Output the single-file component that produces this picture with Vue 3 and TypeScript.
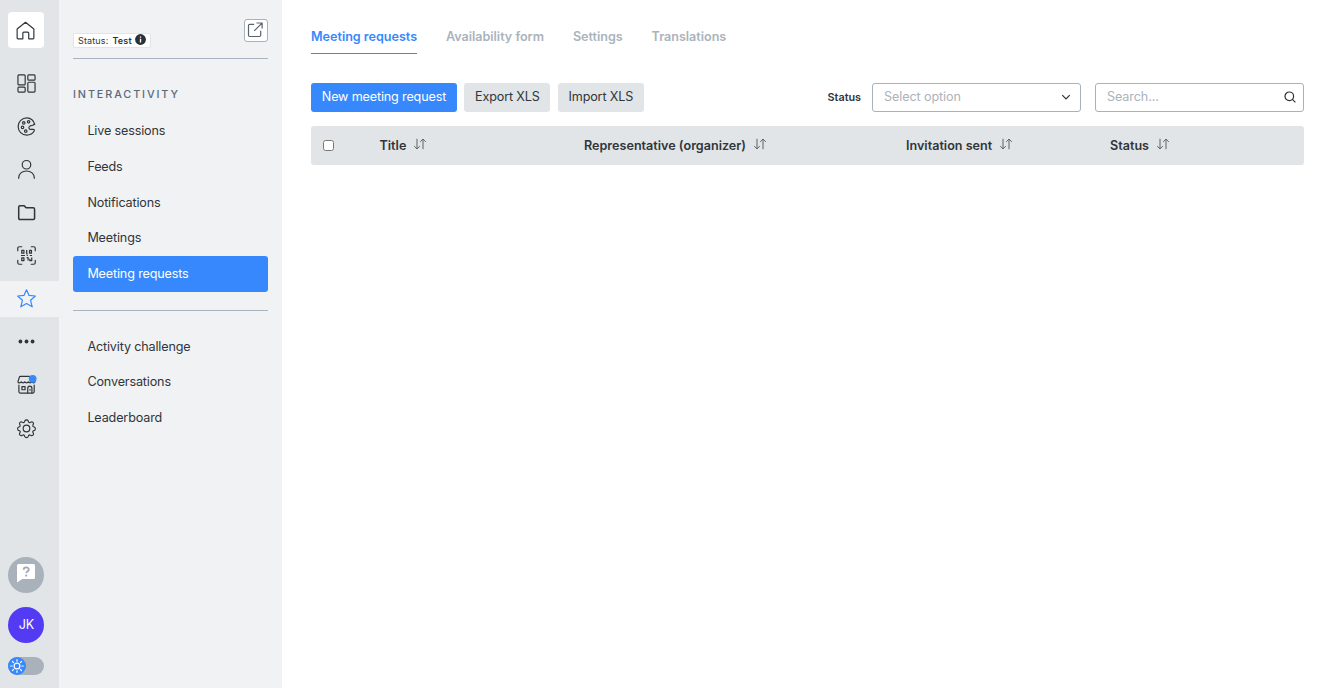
<script setup lang="ts">
import { ref } from 'vue'

const railItems = ['dashboard', 'palette', 'user', 'folder', 'scan', 'star', 'more', 'store', 'gear']
const activeRail = ref('star')

const menuMain = ['Live sessions', 'Feeds', 'Notifications', 'Meetings', 'Meeting requests']
const menuExtra = ['Activity challenge', 'Conversations', 'Leaderboard']
const activeMenu = ref('Meeting requests')

const tabs = ['Meeting requests', 'Availability form', 'Settings', 'Translations']
const activeTab = ref('Meeting requests')

const columns = ['Title', 'Representative (organizer)', 'Invitation sent', 'Status']
const search = ref('')
</script>

<template>
  <div class="layout">
    <nav class="rail">
      <button class="home" aria-label="Home">
        <svg class="icon" viewBox="0 0 20 20"><path d="M1.200 8.500 10 1.400l8.800 7.100V18a.8.8 0 0 1-.8.8h-4.600v-6a1 1 0 0 0-1-1H8.200a1 1 0 0 0-1 1v6H2a.8.8 0 0 1-.8-.8z" /></svg>
      </button>
      <div class="rail-list">
        <button v-for="item in railItems" :key="item" class="rail-item" :class="{ active: item === activeRail }" :aria-label="item" @click="activeRail = item">
          <svg v-if="item === 'dashboard'" class="icon" viewBox="0 0 20 20">
            <rect x="1" y="1" width="7.600" height="10.500" rx="1" /><rect x="11.400" y="1" width="7.600" height="5.500" rx="1" />
            <rect x="1" y="13.900" width="7.600" height="5.100" rx="1" /><rect x="11.400" y="8.700" width="7.600" height="10.300" rx="1" />
          </svg>
          <svg v-else-if="item === 'palette'" class="icon" viewBox="0 0 20 20">
            <path d="M18.600 7.800C17.900 3.900 14.500 1 10.400 1 5.400 1 1.200 5 1.200 10s4 9 9 9c3.500 0 6.600-1.700 8-4.500.3-.8-.2-1.400-1-1.400h-2.400c-2.500 0-3.200-2.700-1-3.700l2.900-.7c1-.1 1-.4.900-.9z" />
            <circle cx="12.200" cy="5.100" r="1.300" /><circle cx="7.100" cy="6.200" r="1.300" /><circle cx="5.800" cy="11" r="1.300" /><circle cx="9.200" cy="14.900" r="1.300" />
          </svg>
          <svg v-else-if="item === 'user'" class="icon" viewBox="0 0 20 20">
            <circle cx="10" cy="5" r="4.500" /><path d="M1.800 19.300v-.6c0-4.200 3.500-7.100 8.200-7.100s8.200 2.900 8.200 7.100v.6" />
          </svg>
          <svg v-else-if="item === 'folder'" class="icon folder" viewBox="0 0 20 20">
            <path d="M1.800 4.200c0-.9.500-1.400 1.400-1.400h4c1.300 0 1.500 2.200 2.700 2.200H17c1 0 1.500.5 1.500 1.500V16c0 .8-.5 1.300-1.300 1.300H3.200c-.9 0-1.400-.5-1.400-1.300z" />
          </svg>
          <svg v-else-if="item === 'scan'" class="icon" viewBox="0 0 20 20">
            <path d="M.8 5V2.400Q.8.800 2.400.8H5M15 .8h2.600q1.600 0 1.600 1.600V5M19.200 15v2.600q0 1.600-1.600 1.600H15M5 19.200H2.400q-1.600 0-1.600-1.600V15" />
            <path class="code" d="M5 4.700h2.300v2.800H5zM13.200 4.700h2v2.800h-2zM5 12.500h2.300v2.800H5zM10.200 4.200v4h1M4.200 10h4.200M10.200 10h1.300M13.500 10h2.300M10.200 12.300h1.500v3M15.500 12v3.500h-2v-2" />
          </svg>
          <svg v-else-if="item === 'star'" class="icon" viewBox="0 0 20 20">
            <path d="m10 .8 2.700 6 6.600.6-5 4.500 1.700 6.900-6-3.500-6 3.500 1.700-6.900-5-4.500 6.600-.6z" />
          </svg>
          <svg v-else-if="item === 'more'" class="icon solid" viewBox="0 0 20 20">
            <circle cx="3.600" cy="10" r="2" /><circle cx="10" cy="10" r="2" /><circle cx="16.400" cy="10" r="2" />
          </svg>
          <svg v-else-if="item === 'store'" class="icon" viewBox="0 0 20 20">
            <path d="M13 1.500H3.700q-1 0-1.300 1L1 7.200c.2 1.500 2.700 1.600 3.500 0 .8 1.500 3 1.500 3.700 0 .8 1.500 3 1.500 3.700 0 .8 1.500 3 1.500 3.700 0 .8 1.500 3 1.400 3.300 0M2 10.700v7q0 1.300 1.300 1.300h13.500q1.300 0 1.300-1.300v-7" />
            <path d="M5.200 12.200h3.300v3.300H5.200zM11.300 18.800v-4.700q0-2.400 2.200-2.400t2.200 2.400v4.700M13.700 15.200v.8" />
            <circle class="dot" cx="16.500" cy="4" r="4.100" />
          </svg>
          <svg v-else class="icon" viewBox="0 0 20 20">
            <circle cx="10" cy="10" r="3.500" />
            <path d="M8.300 1.800c.5-1.100 2.900-1.100 3.400 0l.5 1.300c.3.600 1 .9 1.600.6l1.300-.6c1.100-.5 2.700 1.100 2.200 2.200l-.6 1.300c-.3.600 0 1.300.6 1.600l1.200.4c1.100.5 1.100 2.900 0 3.400l-1.200.4c-.6.300-.9 1-.6 1.600l.6 1.300c.5 1.100-1.100 2.700-2.200 2.200l-1.300-.6c-.6-.3-1.300 0-1.600.6l-.5 1.200c-.5 1.100-2.900 1.100-3.400 0l-.5-1.200c-.3-.6-1-.9-1.600-.6l-1.300.6c-1.100.5-2.700-1.100-2.200-2.200l.6-1.300c.3-.6 0-1.300-.6-1.600L1.500 12c-1.100-.5-1.100-2.900 0-3.400l1.200-.4c.6-.3.9-1 .6-1.600l-.6-1.300c-.5-1.100 1.100-2.700 2.200-2.200l1.300.6c.6.3 1.300 0 1.600-.6z" />
          </svg>
        </button>
      </div>
      <div class="rail-bottom">
        <button class="round help" aria-label="Help">
          <svg viewBox="0 0 20 20"><path fill="#fff" d="M2.500 1h15A1.500 1.500 0 0 1 19 2.500v12a1.500 1.500 0 0 1-1.500 1.500H6.200L1 19.500v-17A1.500 1.500 0 0 1 2.500 1z" /><path class="mark" d="M7.600 6.800c0-3.300 5.200-3.200 5.200-.2 0 1.900-2.500 1.800-2.500 3.400M10.200 11.600v1.900" /></svg>
        </button>
        <button class="round avatar">JK</button>
        <button class="switch" aria-label="Theme">
          <span class="knob">
            <svg viewBox="0 0 18 18"><circle cx="9" cy="9" r="2.900" /><path d="M9 2.700v1.500M9 13.800v1.500M2.700 9h1.500M13.800 9h1.500M4.500 4.500l1 1M12.500 12.500l1 1M4.500 13.500l1-1M12.500 5.500l1-1" /></svg>
          </span>
        </button>
      </div>
    </nav>

    <aside class="sidebar">
      <header class="side-head">
        <span class="status">Status: <b>Test</b>
          <svg viewBox="0 0 12 12"><circle cx="6" cy="6" r="5.900" fill="#2b3035" /><path d="M6 2.600v1.500M6 5.200v4.100" stroke="#fff" stroke-width="1.500" /></svg>
        </span>
        <button class="open" aria-label="Open">
          <svg viewBox="0 0 16 16"><path d="M7.200 2.300H2.700q-1.200 0-1.200 1.200v9.800q0 1.200 1.200 1.200h9.800q1.200 0 1.200-1.200V8.700M9.500 1h5.600v5.600M15 1.100 7.200 8.900" /></svg>
        </button>
      </header>
      <h2>INTERACTIVITY</h2>
      <ul class="menu">
        <li v-for="item in menuMain" :key="item" :class="{ active: item === activeMenu }" @click="activeMenu = item">{{ item }}</li>
      </ul>
      <hr />
      <ul class="menu">
        <li v-for="item in menuExtra" :key="item" :class="{ active: item === activeMenu }" @click="activeMenu = item">{{ item }}</li>
      </ul>
    </aside>

    <main class="content">
      <div class="tabs">
        <button v-for="tab in tabs" :key="tab" :class="{ active: tab === activeTab }" @click="activeTab = tab">{{ tab }}</button>
      </div>
      <div class="toolbar">
        <button class="btn primary">New meeting request</button>
        <button class="btn">Export XLS</button>
        <button class="btn">Import XLS</button>
        <span class="filter-label">Status</span>
        <div class="field select">
          <span>Select option</span>
          <svg viewBox="0 0 12 12"><path d="m2.300 4.200 3.700 3.700 3.700-3.700" /></svg>
        </div>
        <label class="field">
          <input v-model="search" placeholder="Search..." />
          <svg viewBox="0 0 12 12"><circle cx="5.300" cy="5.300" r="4.300" /><path d="m8.400 8.400 3 3" /></svg>
        </label>
      </div>
      <div class="table-head">
        <div class="check"><input type="checkbox" aria-label="Select all" /></div>
        <div v-for="col in columns" :key="col" class="col">
          {{ col }}
          <svg viewBox="0 0 14 12"><path d="M4 .8v10M1.200 8.100 4 10.900l2.800-2.800M10 11.200v-10M7.200 3.900 10 1.100l2.800 2.800" /></svg>
        </div>
      </div>
    </main>
  </div>
</template>

<style>
body { margin: 0; }
</style>

<style scoped>
.layout { display: flex; height: 688px; overflow: hidden; background: #fff; font-family: Inter, "Liberation Sans", sans-serif; font-size: 12.6px; font-weight: 400; letter-spacing: -.150px; color: #30353a; }
.layout *, .layout *::before { box-sizing: border-box; }
button { margin: 0; padding: 0; border: 0; background: none; font: inherit; color: inherit; letter-spacing: inherit; }
svg { display: block; fill: none; flex: none; }
.rail { width: 59px; flex: none; display: flex; flex-direction: column; background: #e1e5e8; padding-top: 12px; }
.home { width: 36px; height: 36px; margin-left: 8px; border-radius: 4px; background: #fff; display: grid; place-items: center; }
.icon { width: 19px; height: 19px; stroke: currentColor; stroke-width: 1.25; stroke-linejoin: round; stroke-linecap: round; overflow: visible; }
.home .icon { margin-left: -1px; }
.icon.folder { stroke-width: 1.6; }
.icon.solid { fill: currentColor; stroke: none; }
.icon .dot { fill: #3788fd; stroke: none; }
.icon .code { stroke-width: 1.300; stroke-linecap: butt; }
.rail-list { display: flex; flex-direction: column; gap: 7.150px; margin-top: 17px; }
.rail-item { width: 59px; height: 36px; padding-left: 17px; display: flex; align-items: center; }
.rail-item.active { background: #f0f2f4; color: #3788fd; }
.rail-bottom { margin: auto 0 13px 8px; display: flex; flex-direction: column; }
.round { width: 36px; height: 36px; border-radius: 50%; display: grid; place-items: center; margin-bottom: 14px; }
.help { background: #a9b1bb; }
.help svg { width: 20px; height: 20px; margin-top: -4px; }
.mark { stroke: #a0a9b3; stroke-width: 1.800; }
.avatar { background: #523bf3; color: #fff; padding: 0 0 1px 1px; }
.switch { width: 36px; height: 18px; border-radius: 9px; background: #a9b1bb; }
.knob { display: block; width: 18px; height: 18px; border-radius: 50%; background: #3788fd; }
.knob svg { width: 18px; height: 18px; stroke: #fff; stroke-width: 1.200; stroke-linecap: round; }
.sidebar { width: 223px; flex: none; background: #f0f2f4; padding: 0 14px; }
.side-head { height: 59px; border-bottom: 1px solid #a9b4c0; display: flex; justify-content: space-between; align-items: flex-start; }
.status { display: flex; align-items: center; gap: 4px; width: 78px; height: 15px; margin-top: 33px; padding: 0 4px; border: 1px solid #e1e5e8; border-radius: 2px; background: #fff; font-size: 9px; letter-spacing: .150px; line-height: 11px; white-space: nowrap; }
.status b { font-weight: 600; }
.status svg { width: 11px; height: 11px; margin: -3px 0 0 -1px; }
.open { width: 24px; height: 23px; margin-top: 19px; border: 1px solid #a9b1bb; border-radius: 3px; background: #fff; display: grid; place-items: center; }
.open svg { width: 16px; height: 16px; margin: -2px 0 0 -2px; stroke: #56636f; stroke-width: 1.200; }
h2 { margin: 29px 0 11px; height: 14px; line-height: 14px; font-size: 10.800px; font-weight: 500; letter-spacing: 1.900px; color: #5c6975; }
.menu { list-style: none; margin: 0; padding: 0; }
.menu li { height: 35.800px; line-height: 36px; padding-left: 14.400px; border-radius: 3px; }
.menu li.active { background: #3788fd; color: #fff; }
hr { border: 0; height: 1px; margin: 18px 0 17.600px; background: #a9b4c0; }
.content { flex: 1; padding: 22px 35px 0 29px; }
.tabs { display: flex; gap: 28.900px; height: 32px; font-weight: 600; letter-spacing: -.020px; color: #abb3bb; }
.tabs button { height: 32px; padding-bottom: 2px; border-bottom: 1px solid transparent; }
.tabs .active { color: #3788fd; border-color: #3788fd; }
.toolbar { display: flex; align-items: center; height: 29px; margin-top: 29px; }
.btn { height: 29px; padding: 0 10.800px 2px; margin-right: 7.300px; border-radius: 3px; background: #e1e5e8; white-space: nowrap; }
.btn.primary { background: #3788fd; color: #fff; }
.filter-label { margin-left: auto; margin-right: 11px; font-size: 10.800px; font-weight: 600; letter-spacing: 0; }
.field { display: flex; align-items: center; justify-content: space-between; width: 209px; height: 29px; padding: 0 8px 1px 11px; border: 1px solid #a9b1bb; border-radius: 3px; color: #abb3bb; letter-spacing: -.1px; }
.field span, .field input { margin-top: -1px; }
.select { margin-right: 14px; }
.field svg { width: 12px; height: 12px; stroke: #2b3035; stroke-width: 1.200; }
label.field { padding-right: 7px; }
.field input { width: 150px; padding: 0; border: 0; outline: 0; background: none; font: inherit; color: #2b3035; letter-spacing: inherit; }
.field input::placeholder { color: #abb3bb; opacity: 1; }
.table-head { display: grid; grid-template-columns: 68.500px 204.500px 322px 204px 1fr; align-items: center; height: 39px; margin-top: 14px; border-radius: 3px; background: #e1e5e8; font-weight: 600; letter-spacing: 0; }
.check { padding-left: 12px; height: 11px; }
.check input { display: block; width: 11px; height: 11px; margin: 0; }
.col { display: flex; align-items: center; gap: 7px; }
.col svg { width: 14px; height: 12px; margin-top: -3px; stroke: #4c555e; stroke-width: .9; }
</style>
